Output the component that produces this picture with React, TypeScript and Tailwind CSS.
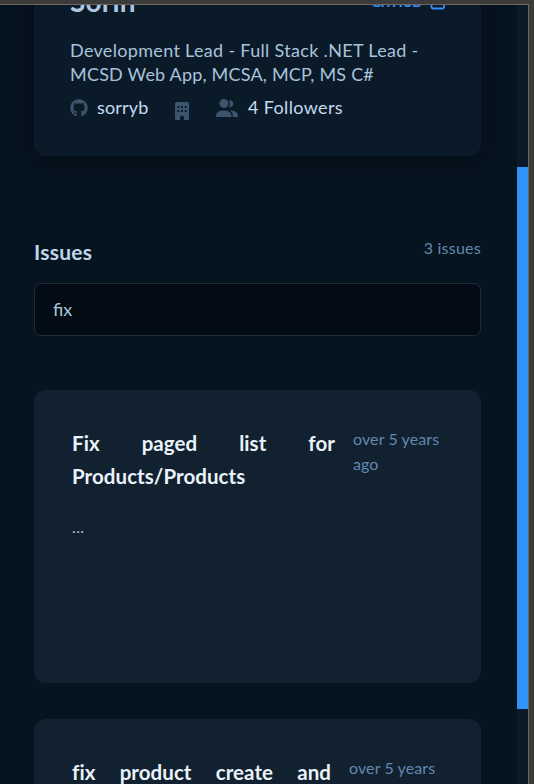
import React from "react";
import { FaGithub } from "react-icons/fa";

function BuildingIcon() {
  return (
    <svg width="14" height="18" viewBox="0 0 14 18" fill="currentColor" fillRule="evenodd" aria-hidden="true">
      <path d="M1.5 0h11Q14 0 14 1.5v15q0 1.500-1.500 1.500H9v-2.500a2 2 0 0 0-4 0V18H1.500Q0 18 0 16.500v-15Q0 0 1.500 0ZM2.300 4v2h2V4ZM6 4v2h2V4Zm3.700 0v2h2V4ZM2.300 8v2h2V8ZM6 8v2h2V8Zm3.700 0v2h2V8Z" />
    </svg>
  );
}

function PeopleIcon() {
  return (
    <svg width="22" height="18" viewBox="0 0 22 18" fill="currentColor" aria-hidden="true">
      <circle cx="8" cy="4.500" r="4.500" />
      <path d="M12.700 8a5.800 5.800 0 0 0 .1-6.600 3.500 3.500 0 1 1-.1 6.600Z" />
      <path d="M0 18v-1.300a6 5.500 0 0 1 6-5.200h3.500a6 5.500 0 0 1 6 5.200V18Z" />
      <path d="M16.800 18v-1.500q-.3-3-2.500-5h1.700a6 5.500 0 0 1 6 5.200V18Z" />
    </svg>
  );
}

function ExternalIcon() {
  return (
    <svg width="16" height="16" viewBox="0 0 16 16" fill="none" stroke="currentColor" strokeWidth="1.8" strokeLinecap="round" strokeLinejoin="round" aria-hidden="true">
      <path d="M6 2H3a1.500 1.500 0 0 0-1.500 1.500V13A1.500 1.500 0 0 0 3 14.500h9.500A1.500 1.500 0 0 0 14 13v-3M9 1h6v6M15 1 7 9" />
    </svg>
  );
}

function ProfileCard() {
  return (
    <section className="-mt-[45px] h-[196px] shrink-0 rounded-xl bg-[#0b1a29] px-9 pt-[24px] shadow-[0_4px_24px_4px_rgba(0,0,0,0.3)]">
      <div className="flex h-[40px] items-start justify-between">
        <h1 className="text-[28px] leading-[34px] font-bold tracking-[0.2px] text-[#afc7de]">Sorin</h1>
        <a className="-mr-px flex items-center gap-[9px] pt-[8px] text-[14px] leading-5 font-bold tracking-[-0.5px] text-[#3192fa]">
          <span>GITHUB</span>
          <ExternalIcon />
        </a>
      </div>
      <p className="mt-[14px] text-[18px] leading-6 whitespace-nowrap text-[#a8c3da]">
        <span className="block tracking-[0.32px]">Development Lead - Full Stack .NET Lead -</span>
        <span className="block tracking-[0.2px]">MCSD Web App, MCSA, MCP, MS C#</span>
      </p>
      <div className="mt-[9px] flex h-6 items-center text-[18px] text-[#c4daf0]">
        <FaGithub className="mt-[2px] size-[18px] text-[#3c546c]" />
        <span className="ml-[9px] w-[52px] tracking-[0.15px]">sorryb</span>
        <span className="mt-[7px] ml-[26px] text-[#3c546c]"><BuildingIcon /></span>
        <span className="mt-[2px] ml-[27px] text-[#3c546c]"><PeopleIcon /></span>
        <span className="ml-[10px] tracking-[0.35px]">4 Followers</span>
      </div>
    </section>
  );
}

function IssueCard({ title, rest, className }: { title: string; rest?: string; className: string }) {
  return (
    <article className="h-[293px] shrink-0 rounded-xl bg-[#112130] px-[38px] pt-[37px]">
      <div className="flex items-start">
        <h3 className={`text-[20.5px] leading-[33px] font-bold tracking-[0.06px] text-[#eaf2fa] ${className}`}>
          <span className="block [text-align-last:justify]">{title}</span>
          {rest && <span className="block">{rest}</span>}
        </h3>
        <time className="-mt-px ml-[18px] text-[16px] leading-[25px] tracking-[0.1px] whitespace-nowrap text-[#6288b0]">
          over 5 years<br />ago
        </time>
      </div>
      <p className="mt-[22px] text-[16px] leading-6 tracking-[0.4px] text-[#a8c3da]">...</p>
    </article>
  );
}

export default function App() {
  return (
    <div className="flex h-[784px] w-[534px] flex-col overflow-hidden bg-[#3c3b3a] font-[Lato,sans-serif]">
      <div className="h-[4px] shrink-0" />
      <div className="flex h-[780px] w-[529px] border-t border-r border-[#6b6865] bg-[#061420]">
        <main className="flex h-full w-[517px] flex-col overflow-hidden pr-9 pl-[34px]">
          <ProfileCard />
          <header className="mt-[82px] flex h-7 shrink-0 items-start justify-between">
            <h2 className="text-[21px] leading-7 font-bold tracking-[0.25px] text-[#bfd5e9]">Issues</h2>
            <span className="text-[16px] leading-5 tracking-[0.25px] text-[#6288b0]">3 issues</span>
          </header>
          <input className="mt-[17px] h-[53px] shrink-0 rounded-[7px] border border-[#1b2c3d] bg-[#030c15] px-[18px] pb-[2px] text-[18px] text-[#a8c3da] outline-none" defaultValue="fix" aria-label="Search issues" />
          <div className="mt-[54px] flex flex-col gap-9">
            <IssueCard title="Fix paged list for" rest="Products/Products" className="w-[263px]" />
            <IssueCard title="fix product create and" className="w-[259px]" />
          </div>
        </main>
        <div className="w-[11px] bg-[#0b1a29] pt-[162px]">
          <div className="h-[542px] bg-[#3192fa]" />
        </div>
      </div>
    </div>
  );
}
